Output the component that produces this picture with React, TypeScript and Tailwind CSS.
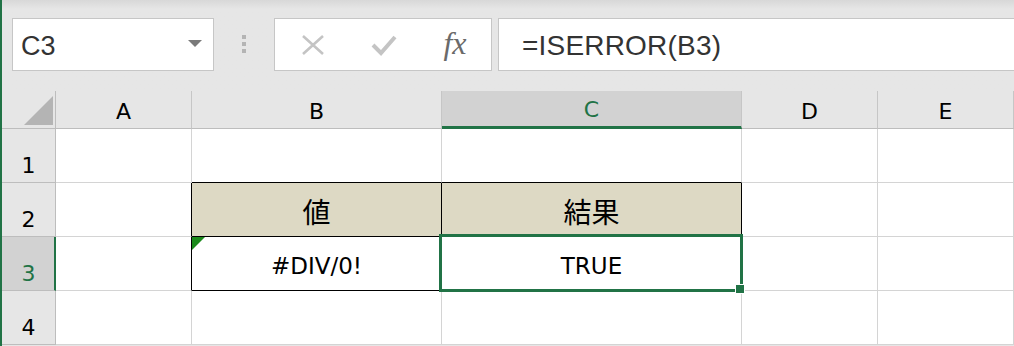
import React from "react";

const cols = [
  { key: "A", w: "w-[136px]" },
  { key: "B", w: "w-[250px]" },
  { key: "C", w: "w-[300px]" },
  { key: "D", w: "w-[136px]" },
  { key: "E", w: "w-[136px]" },
];

const FONT = "font-['DejaVu_Sans','Noto_Sans_CJK_JP',sans-serif]";

const CancelIcon = () => (
  <svg width="24" height="22" viewBox="0 0 24 22">
    <path d="M2 2 L22 20 M22 2 L2 20" stroke="#c4c4c4" strokeWidth="2.6" fill="none" />
  </svg>
);

const EnterIcon = () => (
  <svg width="26" height="22" viewBox="0 0 26 22">
    <path d="M2 11 L10 19 L24 3" stroke="#c4c4c4" strokeWidth="4" fill="none" strokeLinejoin="miter" />
  </svg>
);

type CellProps = {
  col: string;
  row: number;
};

const Cell: React.FC<CellProps> = ({ col, row }) => {
  const w = cols.find((c) => c.key === col)!.w;
  const inTable = (col === "B" || col === "C") && (row === 2 || row === 3);
  const blackRight =
    (col === "A" && (row === 2 || row === 3)) || inTable;
  const blackBottom = (col === "B" || col === "C") && (row === 1 || inTable);

  let content: React.ReactNode = null;
  if (row === 2 && col === "B") content = <span className="text-[28px] leading-none pt-[9px]">値</span>;
  if (row === 2 && col === "C") content = <span className="text-[28px] leading-none pt-[9px]">結果</span>;
  if (row === 3 && col === "B") content = <span className="text-[23px] leading-none pt-[6px]">#DIV/0!</span>;
  if (row === 3 && col === "C") content = <span className="text-[23px] leading-none pt-[6px]">TRUE</span>;

  const isActive = row === 3 && col === "C";

  return (
    <div
      className={`relative ${isActive ? "z-10" : ""} ${w} h-[54px] flex items-center justify-center border-r border-b text-black ${
        inTable && row === 2 ? "bg-[#ddd9c4]" : "bg-white"
      } ${blackRight ? "border-r-black" : "border-r-[#d4d4d4]"} ${
        blackBottom ? "border-b-black" : "border-b-[#d4d4d4]"
      }`}
    >
      {content}
      {row === 3 && col === "B" && (
        <div className="absolute left-0 top-0 w-0 h-0 border-t-[13px] border-t-[#1b8a1b] border-r-[13px] border-r-transparent" />
      )}
      {isActive && (
        <>
          <div className="absolute left-[-3px] top-[-3px] right-[-2px] bottom-[-2px] border-[3px] border-[#217346]" />
          <div className="absolute right-[-4px] bottom-[-4px] w-[10px] h-[10px] bg-[#217346] border border-white" />
        </>
      )}
    </div>
  );
};

export default function App() {
  return (
    <div className={`w-[1014px] h-[346px] overflow-hidden flex bg-[#e6e6e6] ${FONT}`}>
      <div className="w-[2px] shrink-0 bg-[#217346]" />
      <div className="flex-1 flex flex-col">
        {/* formula bar */}
        <div className="h-[91px] flex items-start pt-[18px] bg-gradient-to-b from-[#d8d8d8] to-[#e6e6e6] to-[10%]">
          <div className="ml-[10px] w-[202px] h-[53px] bg-white border border-[#c6c6c6] flex items-center justify-between pl-[8px] pr-[11px]">
            <span className="font-['Liberation_Sans',sans-serif] text-[27px] text-[#333] pt-[3px]">C3</span>
            <span className="w-0 h-0 border-l-[7px] border-r-[7px] border-t-[7px] border-l-transparent border-r-transparent border-t-[#7a7a7a] mb-[2px]" />
          </div>
          <div className="w-[60px] h-[53px] flex flex-col items-center justify-center gap-[3px] pb-[2px]">
            <span className="w-[4px] h-[4px] bg-[#b4b4b4]" />
            <span className="w-[4px] h-[4px] bg-[#b4b4b4]" />
            <span className="w-[4px] h-[4px] bg-[#b4b4b4]" />
          </div>
          <div className="w-[218px] h-[53px] bg-white border border-[#c6c6c6] flex items-center">
            <div className="w-[74px] flex justify-center pl-[2px]">
              <CancelIcon />
            </div>
            <div className="w-[70px] flex justify-center">
              <EnterIcon />
            </div>
            <div className="w-[72px] flex justify-center">
              <span className="font-['Liberation_Serif',serif] italic text-[32px] leading-none text-[#6a6a6a] pb-[4px]">
                fx
              </span>
            </div>
          </div>
          <div className="ml-[6px] flex-1 mr-[-2px] h-[53px] bg-white border border-[#c6c6c6] flex items-center pl-[23px]">
            <span className="font-['Liberation_Sans',sans-serif] text-[28px] text-[#333] tracking-[0.2px] pt-[2px]">
              =ISERROR(B3)
            </span>
          </div>
        </div>

        {/* column headers */}
        <div className="flex h-[38px]">
          <div className="w-[54px] h-full border-r border-b border-[#bdbdbd] flex items-end justify-end pr-[2px] pb-[3px]">
            <svg width="29" height="29" viewBox="0 0 29 29">
              <polygon points="29,0 29,29 0,29" fill="#b4b4b4" />
            </svg>
          </div>
          {cols.map((c) => {
            const sel = c.key === "C";
            return (
              <div
                key={c.key}
                className={`${c.w} h-full flex items-end justify-center border-r border-r-[#c6c6c6] pb-[5px] ${
                  sel
                    ? "bg-[#d2d2d2] text-[#217346] border-b-[3px] border-b-[#217346]"
                    : "text-black border-b border-b-[#bdbdbd]"
                }`}
              >
                <span className="text-[22px] leading-none">{c.key}</span>
              </div>
            );
          })}
        </div>

        {/* rows */}
        {[1, 2, 3, 4].map((r) => {
          const sel = r === 3;
          return (
            <div key={r} className="flex">
              <div
                className={`w-[54px] h-[54px] flex items-end justify-center border-b border-b-[#bdbdbd] pb-[5px] ${
                  sel
                    ? "bg-[#d2d2d2] text-[#217346] border-r-[2px] border-r-[#217346] pl-[1px]"
                    : "bg-[#e6e6e6] text-black border-r border-r-[#bdbdbd]"
                }`}
              >
                <span className="text-[22px] leading-none">{r}</span>
              </div>
              {cols.map((c) => (
                <Cell key={c.key} col={c.key} row={r} />
              ))}
            </div>
          );
        })}
      </div>
    </div>
  );
}
